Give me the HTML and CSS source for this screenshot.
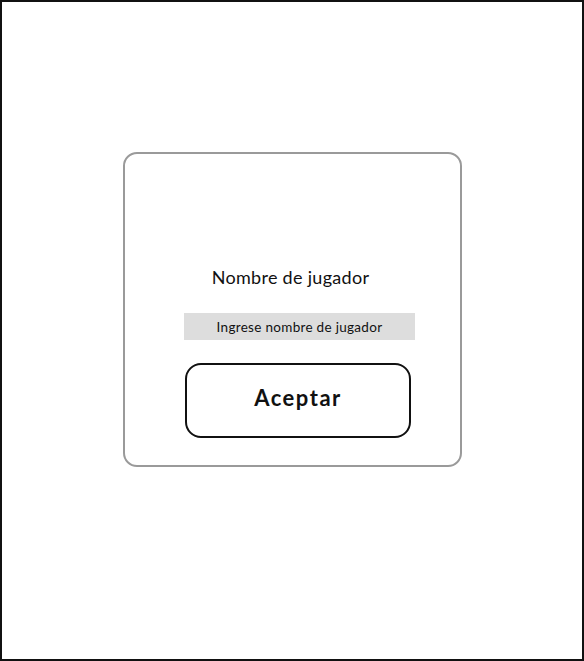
FILE: index.html
```html
<!DOCTYPE html>
<html lang="es">
<head>
    <meta charset="UTF-8">
    <meta name="viewport" content="width=device-width, initial-scale=1.0">
    <title>Nombre de jugador</title>
    <link rel="stylesheet" href="styles.css">
</head>
<body>
    <div class="frame">
        <div class="card">
            <label class="player-label" for="playerName">Nombre de jugador</label>
            <input type="text" id="playerName" class="player-input" placeholder="Ingrese nombre de jugador">
            <button class="accept-button">Aceptar</button>
        </div>
    </div>
</body>
</html>
```

FILE: styles.css
```css
body {
    margin: 0;
    padding: 0;
    background-color: #ffffff;
    font-family: "Lato", "Open Sans", sans-serif;
}

.frame {
    box-sizing: border-box;
    width: 584px;
    height: 661px;
    border: 2px solid #111111;
    padding-top: 150px;
    padding-left: 121px;
}

.card {
    box-sizing: border-box;
    width: 339px;
    height: 315px;
    border: 2px solid #9a9a9a;
    border-radius: 14px;
    padding-top: 112px;
    display: flex;
    flex-direction: column;
}

.player-label {
    display: block;
    font-size: 18px;
    line-height: 22px;
    letter-spacing: 0.3px;
    color: #111111;
    text-align: center;
    margin-right: 4px;
}

.player-input {
    box-sizing: border-box;
    width: 231px;
    height: 27px;
    margin: 25px 0 0 59px;
    border: none;
    background-color: #dddddd;
    font-family: inherit;
    font-size: 13.5px;
    letter-spacing: 0.3px;
    text-align: center;
    outline: none;
}

.player-input::placeholder {
    color: #111111;
    opacity: 1;
}

.accept-button {
    box-sizing: border-box;
    width: 226px;
    height: 75px;
    margin: 23px 0 0 60px;
    padding: 0 0 7px 0;
    background-color: #ffffff;
    border: 2px solid #111111;
    border-radius: 16px;
    font-family: inherit;
    font-size: 22px;
    font-weight: 700;
    letter-spacing: 1.5px;
    color: #111111;
    cursor: pointer;
}
```
